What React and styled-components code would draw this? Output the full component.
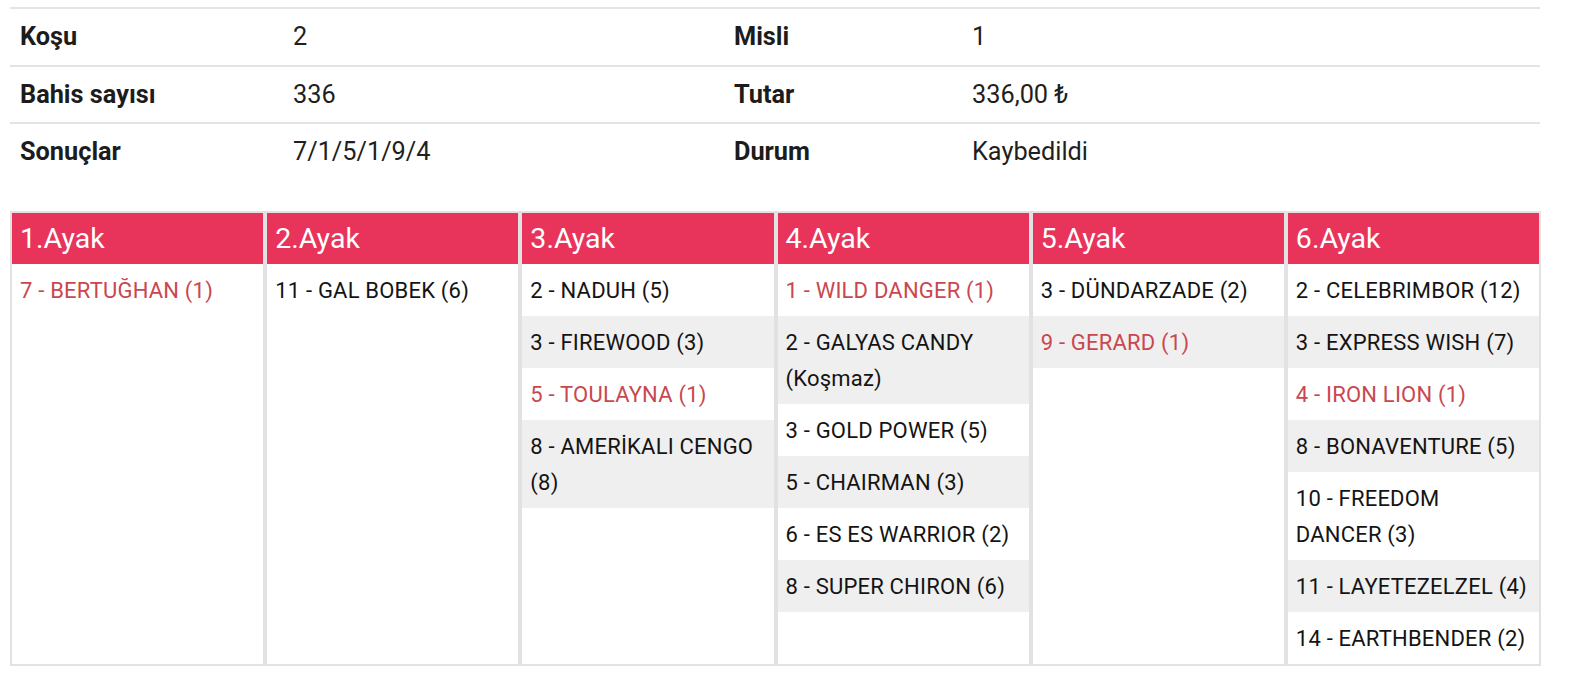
import React from 'react'
import styled, { createGlobalStyle } from 'styled-components'

const GlobalStyle = createGlobalStyle`
    body {
        margin: 0;
        background: #ffffff;
        font-family: Roboto, "Noto Sans", Arial, sans-serif;
        color: #1a1a1a;
    }
`

const info = [
    ['Koşu', '2', 'Misli', '1'],
    ['Bahis sayısı', '336', 'Tutar', '336,00 ₺'],
    ['Sonuçlar', '7/1/5/1/9/4', 'Durum', 'Kaybedildi'],
]

const legs = [
    [{ t: '7 - BERTUĞHAN (1)', win: true }],
    [{ t: '11 - GAL BOBEK (6)' }],
    [
        { t: '2 - NADUH (5)' },
        { t: '3 - FIREWOOD (3)' },
        { t: '5 - TOULAYNA (1)', win: true },
        { t: '8 - AMERİKALI CENGO (8)' },
    ],
    [
        { t: '1 - WILD DANGER (1)', win: true },
        { t: '2 - GALYAS CANDY (Koşmaz)' },
        { t: '3 - GOLD POWER (5)' },
        { t: '5 - CHAIRMAN (3)' },
        { t: '6 - ES ES WARRIOR (2)' },
        { t: '8 - SUPER CHIRON (6)' },
    ],
    [
        { t: '3 - DÜNDARZADE (2)' },
        { t: '9 - GERARD (1)', win: true },
    ],
    [
        { t: '2 - CELEBRIMBOR (12)' },
        { t: '3 - EXPRESS WISH (7)' },
        { t: '4 - IRON LION (1)', win: true },
        { t: '8 - BONAVENTURE (5)' },
        { t: '10 - FREEDOM DANCER (3)' },
        { t: '11 - LAYETEZELZEL (4)' },
        { t: '14 - EARTHBENDER (2)' },
    ],
]

function App() {
    return (
        <Page>
            <GlobalStyle />
            <InfoTable>
                {info.map((row, i) => (
                    <InfoRow key={i}>
                        <Label>{row[0]}</Label>
                        <Value>{row[1]}</Value>
                        <Label>{row[2]}</Label>
                        <Value>{row[3]}</Value>
                    </InfoRow>
                ))}
            </InfoTable>
            <Legs>
                {legs.map((horses, i) => (
                    <Leg key={i}>
                        <LegHead>{i + 1}.Ayak</LegHead>
                        {horses.map((h, j) => (
                            <Horse key={j} $win={h.win}>{h.t}</Horse>
                        ))}
                    </Leg>
                ))}
            </Legs>
        </Page>
    )
}

export default App

const Page = styled.div`
    width: 1531px;
    padding: 7px 0 0 10px;
`
const InfoTable = styled.div`
    width: 1530px;
`
const InfoRow = styled.div`
    display: grid;
    grid-template-columns: 273px 441px 238px 1fr;
    align-items: center;
    height: 55.5px;
    border-top: 2px solid #e4e4e4;
`
const Label = styled.div`
    padding-left: 10px;
    font-size: 25.3px;
    font-weight: 700;
    color: #1c1c1c;
`
const Value = styled.div`
    padding-left: 10px;
    font-size: 25.3px;
    color: #1f1f1f;
`
const Legs = styled.div`
    margin-top: 31px;
    display: flex;
    align-items: stretch;
`
const Leg = styled.div`
    flex: 1;
    min-width: 0;
    border: 2px solid #e2e2e2;
    background: #fff;
`
const LegHead = styled.div`
    height: 51px;
    display: flex;
    align-items: center;
    padding: 0 8px;
    background: #e8345a;
    color: #fff;
    font-size: 28.5px;
`
const Horse = styled.div`
    padding: 9px 12px 7px 8px;
    font-size: 22px;
    letter-spacing: 0.2px;
    line-height: 36px;
    color: ${p => (p.$win ? '#c9474f' : '#141414')};
    &:nth-of-type(odd) {
        background: #efefef;
    }
`
